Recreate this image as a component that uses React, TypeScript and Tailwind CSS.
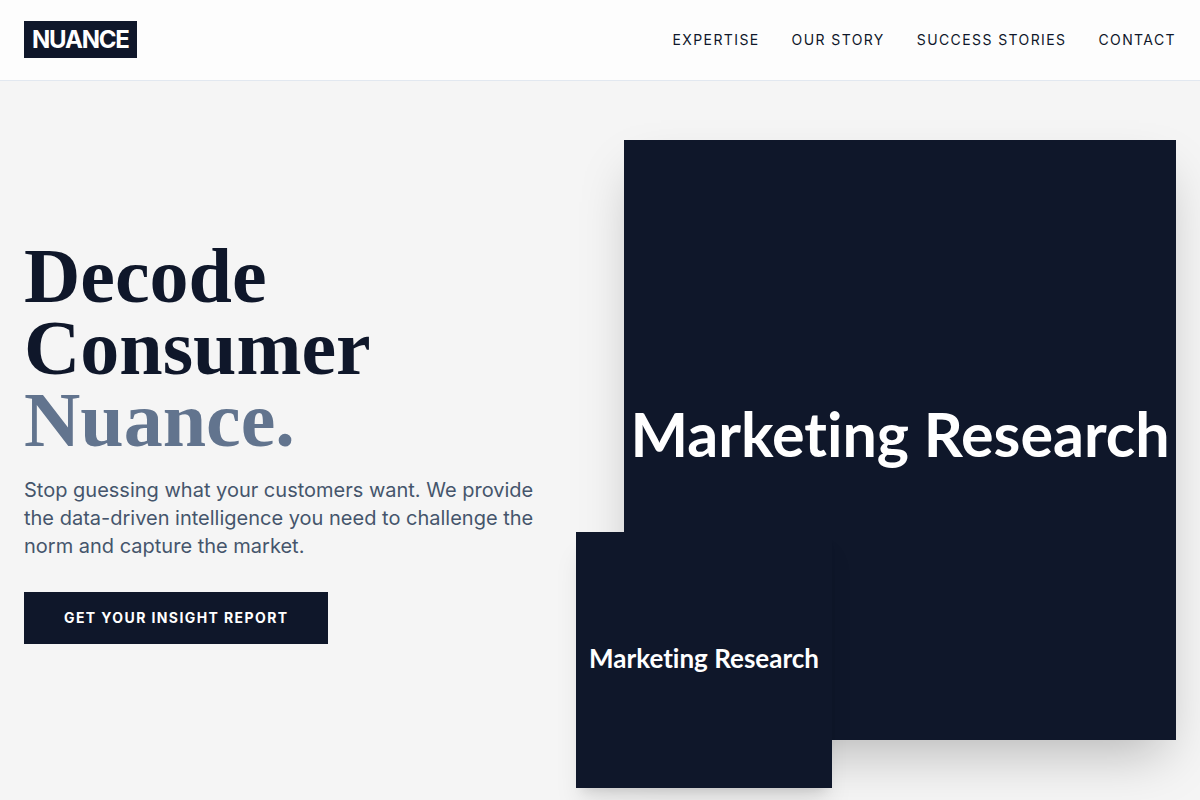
/* Landing page: fixed navigation bar and hero section. */
const navLinks = [
  { label: "Expertise", href: "#expertise" },
  { label: "Our Story", href: "#our-story" },
  { label: "Success Stories", href: "#success-stories" },
  { label: "Contact", href: "#contact" },
];

function Header() {
  return (
    <header className="fixed inset-x-0 top-0 z-50 border-b border-slate-200 bg-[#fdfdfd]">
      <div className="mx-auto flex h-20 max-w-7xl items-center justify-between px-6">
        <a
          href="#top"
          className="text-2xl font-bold tracking-tighter text-white"
        >
          <span className="bg-[#0f172a] px-2 py-1">NUANCE</span>
        </a>
        <nav className="flex gap-8 text-sm tracking-widest text-[#0f172a] uppercase">
          {navLinks.map((link) => (
            <a key={link.href} href={link.href}>
              {link.label}
            </a>
          ))}
        </nav>
      </div>
    </header>
  );
}

function Hero() {
  return (
    <section
      id="top"
      className="mx-auto flex min-h-screen max-w-7xl items-center px-6 pt-20"
    >
      <div className="grid w-full grid-cols-2 items-center gap-12">
        <div>
          <h1 className="mb-5 pt-1 font-['Liberation_Serif',serif] text-[78px] leading-[72px] font-bold text-[#0f172a]">
            Decode
            <br />
            Consumer
            <br />
            <span className="text-slate-500">Nuance.</span>
          </h1>
          <p className="mb-8 max-w-lg text-xl text-slate-600">
            Stop guessing what your customers want. We provide the data-driven
            intelligence you need to challenge the norm and capture the market.
          </p>
          <button
            type="button"
            className="bg-[#0f172a] px-10 py-4 text-sm font-bold tracking-widest text-white uppercase"
          >
            Get Your Insight Report
          </button>
        </div>
        <div className="relative font-['Lato',sans-serif] font-bold whitespace-nowrap text-white [font-variant-ligatures:none]">
          <div className="flex h-[600px] items-center justify-center bg-[#0f172a] pb-3 text-[61px] shadow-2xl">
            Marketing Research
          </div>
          <div className="absolute -bottom-12 -left-12 flex size-64 items-center justify-center bg-[#0f172a] pb-1 text-[26px] shadow-xl">
            Marketing Research
          </div>
        </div>
      </div>
    </section>
  );
}

export default function App() {
  return (
    <div className="min-h-screen bg-[#f5f5f5] font-['Inter',sans-serif]">
      <Header />
      <main>
        <Hero />
      </main>
    </div>
  );
}
